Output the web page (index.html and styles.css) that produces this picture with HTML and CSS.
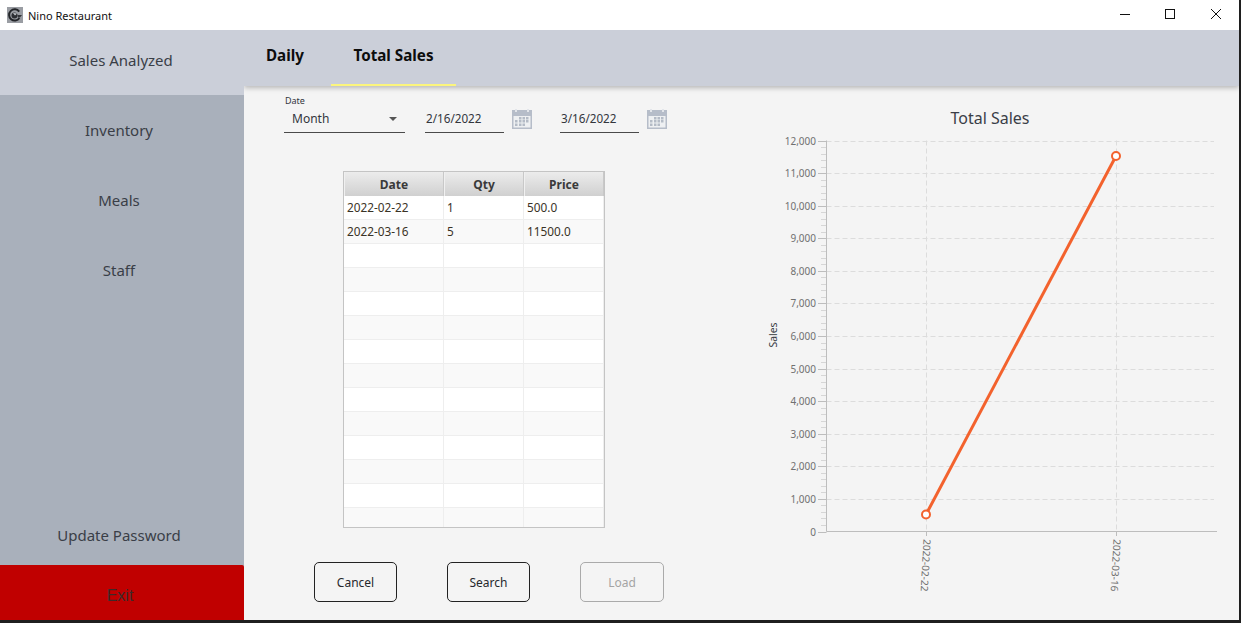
FILE: index.html
```html
<!DOCTYPE html>
<html lang="en">

<head>
    <meta charset="UTF-8">
    <title>Nino Restaurant</title>
    <link rel="stylesheet" href="styles.css">
</head>

<body>
    <div class="window">
        <div class="titlebar">
            <svg class="app-icon" width="16" height="16" viewBox="0 0 16 16">
                <rect width="16" height="16" fill="#9a9da3"/>
                <path d="M12.2 4.6 A5.6 5.6 0 1 0 12.4 11" fill="none" stroke="#232529" stroke-width="2"/>
                <circle cx="7.5" cy="8.5" r="3" fill="#2c2e33"/>
                <path d="M6 6 L10 6.5 L8 8.5 Z" fill="#c9ccd1"/>
                <path d="M10.5 8 H15 L13 10.5 H11 Z" fill="#33353a"/>
            </svg>
            <span class="app-title">Nino Restaurant</span>
            <div class="win-controls">
                <div class="win-btn">
                    <svg width="12" height="12" viewBox="0 0 12 12"><path d="M1 5.5H11" stroke="#111" stroke-width="1"/></svg>
                </div>
                <div class="win-btn">
                    <svg width="12" height="12" viewBox="0 0 12 12"><rect x="0.5" y="0.5" width="9" height="9" fill="none" stroke="#111"/></svg>
                </div>
                <div class="win-btn win-close">
                    <svg width="12" height="12" viewBox="0 0 12 12"><path d="M1 0L11 10M11 0L1 10" stroke="#111" stroke-width="1"/></svg>
                </div>
            </div>
        </div>

        <div class="app">
            <nav class="sidebar">
                <div class="nav-item nav-active">Sales Analyzed</div>
                <div class="nav-item">Inventory</div>
                <div class="nav-item">Meals</div>
                <div class="nav-item">Staff</div>
                <div class="nav-item nav-update">Update Password</div>
                <div class="nav-exit">Exit</div>
            </nav>

            <main class="main">
                <div class="tabs">
                    <div class="tab tab-daily">Daily</div>
                    <div class="tab tab-selected">Total Sales</div>
                </div>

                <div class="content">
                    <section class="left-panel">
                        <div class="filters">
                            <div class="combo">
                                <label class="combo-label">Date</label>
                                <div class="combo-field">
                                    <span>Month</span>
                                    <span class="combo-arrow"></span>
                                </div>
                            </div>
                            <div class="date-picker">
                                <div class="date-field">2/16/2022</div>
                                <svg class="cal-icon" width="20" height="20"><use href="#cal"/></svg>
                            </div>
                            <div class="date-picker">
                                <div class="date-field">3/16/2022</div>
                                <svg class="cal-icon" width="20" height="20"><use href="#cal"/></svg>
                            </div>
                        </div>

                        <div class="table-box">
                            <table class="sales-table">
                                <thead>
                                    <tr><th>Date</th><th>Qty</th><th>Price</th></tr>
                                </thead>
                                <tbody>
                                    <tr><td>2022-02-22</td><td>1</td><td>500.0</td></tr>
                                    <tr><td>2022-03-16</td><td>5</td><td>11500.0</td></tr>
                                    <tr><td></td><td></td><td></td></tr>
                                    <tr><td></td><td></td><td></td></tr>
                                    <tr><td></td><td></td><td></td></tr>
                                    <tr><td></td><td></td><td></td></tr>
                                    <tr><td></td><td></td><td></td></tr>
                                    <tr><td></td><td></td><td></td></tr>
                                    <tr><td></td><td></td><td></td></tr>
                                    <tr><td></td><td></td><td></td></tr>
                                    <tr><td></td><td></td><td></td></tr>
                                    <tr><td></td><td></td><td></td></tr>
                                    <tr><td></td><td></td><td></td></tr>
                                    <tr><td></td><td></td><td></td></tr>
                                </tbody>
                            </table>
                        </div>

                        <div class="actions">
                            <button class="btn">Cancel</button>
                            <button class="btn">Search</button>
                            <button class="btn btn-disabled">Load</button>
                        </div>
                    </section>

                    <section class="chart-panel">
                        <svg id="chart" class="chart" width="489" height="534" viewBox="750 86 489 534"></svg>
                    </section>
                </div>
            </main>
        </div>
    </div>

    <svg width="0" height="0" class="defs">
        <symbol id="cal" viewBox="0 0 20 20">
            <rect x="0" y="1" width="20" height="19" fill="#b6bdc9"/>
            <rect x="1.5" y="7" width="17" height="11.5" fill="#eef0f2"/>
            <rect x="3" y="0" width="2" height="3" fill="#e2e5ea"/>
            <rect x="15" y="0" width="2" height="3" fill="#e2e5ea"/>
            <g fill="#b4bbc6">
                <rect x="7" y="8" width="2.5" height="2.5"/><rect x="10.5" y="8" width="2.5" height="2.5"/><rect x="14" y="8" width="2.5" height="2.5"/>
                <rect x="3" y="11" width="2.5" height="2.5"/><rect x="7" y="11" width="2.5" height="2.5"/><rect x="10.5" y="11" width="2.5" height="2.5"/><rect x="14" y="11" width="2.5" height="2.5"/>
                <rect x="3" y="14.5" width="2.5" height="2.5"/><rect x="7" y="14.5" width="2.5" height="2.5"/><rect x="10.5" y="14.5" width="2.5" height="2.5"/>
            </g>
        </symbol>
    </svg>

    <script>
        const NS = "http://www.w3.org/2000/svg";
        const chart = document.getElementById("chart");
        const top_y = 140.5, zero_y = 531.5, axis_x = 826.5, right_x = 1217;

        function add(tag, attrs, text) {
            const el = document.createElementNS(NS, tag);
            Object.keys(attrs).forEach(k => el.setAttribute(k, attrs[k]));
            if (text) el.textContent = text;
            chart.appendChild(el);
            return el;
        }

        function yFor(value) {
            return zero_y - (value / 12000) * (zero_y - top_y);
        }

        add("text", { x: 990, y: 124, class: "chart-title", "text-anchor": "middle" }, "Total Sales");
        add("text", { class: "chart-axis-label", "text-anchor": "middle", transform: "translate(777 335) rotate(-90)" }, "Sales");

        // horizontal grid, ticks and labels
        for (let v = 0; v <= 12000; v += 1000) {
            const y = Math.round(yFor(v)) + 0.5;
            if (v > 0) add("line", { x1: axis_x, x2: 1214, y1: y, y2: y, class: "grid" });
            add("line", { x1: 818, x2: axis_x, y1: y, y2: y, class: "tick" });
            add("text", { x: 816, y: y + 3.5, class: "tick-label", "text-anchor": "end" }, v.toLocaleString("en-US"));
            if (v < 12000) {
                for (let m = 200; m < 1000; m += 200) {
                    const my = Math.round(yFor(v + m)) + 0.5;
                    add("line", { x1: 821, x2: axis_x, y1: my, y2: my, class: "tick-minor" });
                }
            }
        }

        // vertical grid and date labels
        [[926.5, "2022-02-22"], [1116.5, "2022-03-16"]].forEach(item => {
            add("line", { x1: item[0], x2: item[0], y1: top_y, y2: zero_y, class: "grid" });
            add("line", { x1: item[0], x2: item[0], y1: zero_y, y2: 536, class: "tick" });
            add("text", { class: "tick-label", transform: "translate(" + (item[0] - 3) + " 539) rotate(93)" }, item[1]);
        });

        add("line", { x1: axis_x, x2: axis_x, y1: top_y, y2: zero_y, class: "axis" });
        add("line", { x1: axis_x, x2: right_x, y1: zero_y, y2: zero_y, class: "axis" });

        // series
        add("line", { x1: 926, y1: 514.5, x2: 1116, y2: 156, class: "series" });
        add("circle", { cx: 926, cy: 514.5, r: 4, class: "point" });
        add("circle", { cx: 1116, cy: 156, r: 4, class: "point" });
    </script>
</body>

</html>
```

FILE: styles.css
```css
* {
    box-sizing: border-box;
}

body {
    margin: 0;
    padding: 0;
    background-color: #1f1f1f;
    font-family: "Noto Sans", Arial, sans-serif;
    color: #33363d;
    overflow: hidden;
}

.defs {
    display: block;
    height: 0;
}

.window {
    width: 1239px;
    height: 620px;
    display: flex;
    flex-direction: column;
    background-color: #f4f4f4;
    overflow: hidden;
}

/* title bar */
.titlebar {
    height: 30px;
    flex: none;
    background-color: white;
    display: flex;
    align-items: center;
    padding-left: 7px;
}

.app-icon {
    flex: none;
}

.app-title {
    margin-left: 5px;
    font-size: 11px;
    color: #111;
}

.win-controls {
    margin-left: auto;
    display: flex;
}

.win-btn {
    width: 46px;
    height: 30px;
    display: flex;
    align-items: center;
    justify-content: center;
}

.win-close {
    width: 44px;
    margin-right: 1px;
}

/* layout */
.app {
    flex: 1;
    display: flex;
    min-height: 0;
}

.sidebar {
    width: 244px;
    flex: none;
    display: flex;
    flex-direction: column;
    background-color: #a9b0bb;
}

.nav-item {
    height: 70px;
    display: flex;
    align-items: center;
    justify-content: center;
    font-size: 15px;
    color: #3a3e47;
    padding-right: 6px;
}

.nav-active {
    height: 65px;
    background-color: #cbcfd9;
    padding-right: 2px;
    padding-bottom: 5px;
}

.nav-update {
    margin-top: auto;
    height: 60px;
}

.nav-exit {
    height: 55px;
    flex: none;
    padding-top: 22px;
    text-align: center;
    background-color: #c00000;
    border-top-right-radius: 2px;
    font-family: "Liberation Sans", Arial, sans-serif;
    font-size: 16px;
    color: #3c2a2a;
    padding-right: 4px;
}

.main {
    flex: 1;
    display: flex;
    flex-direction: column;
    min-width: 0;
    overflow: hidden;
}

/* tabs */
.tabs {
    height: 56px;
    flex: none;
    display: flex;
    padding-left: 22px;
    background-color: #cbcfd9;
    box-shadow: 0px 2px 5px rgba(0, 0, 0, 0.25);
    position: relative;
}

.tab {
    font-size: 15.2px;
    font-weight: bold;
    color: #0d0d0d;
    padding-top: 15px;
}

.tab-daily {
    width: 65px;
}

.tab-selected {
    width: 125px;
    text-align: center;
    border-bottom: 2px solid #fbf57d;
}

.content {
    flex: 1;
    display: flex;
    min-height: 0;
}

/* left side */
.left-panel {
    width: 506px;
    flex: none;
    padding-left: 40px;
    padding-top: 9px;
}

.filters {
    display: flex;
    align-items: flex-end;
    height: 38px;
}

.combo {
    width: 121px;
    margin-right: 20px;
}

.combo-label {
    display: block;
    font-size: 9px;
    line-height: 11px;
    padding-left: 1px;
}

.combo-field {
    height: 27px;
    display: flex;
    align-items: center;
    justify-content: space-between;
    padding: 0 8px 1px;
    border-bottom: 1px solid #4a4a4a;
    font-size: 12px;
}

.combo-arrow {
    width: 0;
    height: 0;
    border-left: 4px solid transparent;
    border-right: 4px solid transparent;
    border-top: 4px solid #555;
}

.date-picker {
    display: flex;
    align-items: flex-end;
    margin-right: 28px;
}

.date-picker:last-child {
    margin-right: 0;
}

.date-field {
    width: 79px;
    height: 27px;
    line-height: 24px;
    padding-left: 1px;
    border-bottom: 1px solid #4a4a4a;
    font-size: 11.7px;
}

.cal-icon {
    margin-left: 8px;
    margin-bottom: 4px;
    display: block;
}

.table-box {
    margin-top: 38px;
    margin-left: 59px;
    width: 262px;
    height: 357px;
    overflow: hidden;
    background-color: white;
    border: 1px solid #c4c4c4;
}

.sales-table {
    border-collapse: separate;
    border-spacing: 0;
    table-layout: fixed;
    width: 260px;
    font-size: 11.8px;
}

.sales-table th {
    height: 24px;
    padding: 0;
    font-size: 12px;
    font-weight: bold;
    color: #3a3a3a;
    background: linear-gradient(#ececec, #d0d0d0);
    border-right: 1px solid #c8c8c8;
    border-left: 1px solid #f0f0f0;
}

.sales-table th:nth-child(1), .sales-table td:nth-child(1) {
    width: 100px;
}

.sales-table th:nth-child(2), .sales-table td:nth-child(2) {
    width: 80px;
}

.sales-table td {
    height: 24px;
    padding: 0 3px 1px;
    border-right: 1px solid #eeeeee;
    border-bottom: 1px solid #eeeeee;
    color: #3a3326;
}

.sales-table tbody tr:nth-child(even) {
    background-color: #f9f9f9;
}

.actions {
    margin-top: 34px;
    margin-left: 30px;
    display: flex;
    gap: 50px;
}

.btn {
    width: 83px;
    height: 40px;
    background-color: #f4f4f4;
    border: 1px solid #222;
    border-radius: 5px;
    font-family: "Noto Sans", Arial, sans-serif;
    font-size: 12px;
    color: #26282c;
}

.btn-disabled {
    width: 84px;
    border-color: #aaa;
    color: #a4a4a4;
}

/* chart */
.chart-panel {
    flex: 1;
    min-width: 0;
}

.chart {
    display: block;
}

.chart-title {
    font-size: 16px;
    fill: #3a3e47;
}

.chart-axis-label {
    font-size: 10.4px;
    fill: #3a3e47;
}

.tick-label {
    font-size: 10px;
    fill: #707070;
}

.grid {
    stroke: #dcdcdc;
    stroke-width: 1;
    stroke-dasharray: 5 3;
}

.tick, .axis {
    stroke: #bdbdbd;
    stroke-width: 1;
}

.tick-minor {
    stroke: #d6d6d6;
    stroke-width: 1;
}

.series {
    stroke: #f3622d;
    stroke-width: 3;
}

.point {
    fill: white;
    stroke: #f3622d;
    stroke-width: 2;
}
```
